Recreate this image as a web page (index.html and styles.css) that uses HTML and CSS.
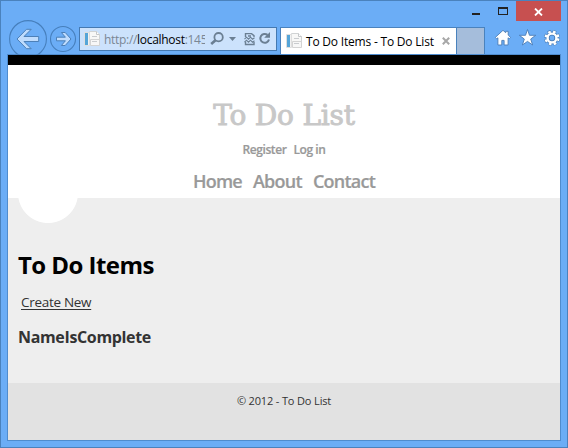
FILE: index.html
```html
<!DOCTYPE html>
<html lang="en">
<head>
<meta charset="utf-8">
<title>To Do Items - To Do List</title>
<link rel="stylesheet" href="styles.css">
</head>
<body>
<svg class="defs" width="0" height="0">
  <symbol id="page" viewBox="0 0 16 16">
    <path d="M5.5.5h7l3 3v10h-10z" fill="#f8f8f7" stroke="#d0d3d4"/>
    <path d="M12.5.5v3h3" fill="#fff" stroke="#c4c7c9"/>
    <path d="M.5 1.5h5v13h-5z" fill="#f2f2f2" stroke="#dedede"/>
    <path d="M1 2h3v12H1z" fill="#55a5d8"/>
    <path d="M6.5 8.5h9v6h-9z" fill="#f7f7f7" stroke="#d3d3d3"/>
    <path d="M8 5.5h5M8 10.5h5" stroke="#c9cccf"/>
  </symbol>
</svg>
<div class="window">
  <header class="chrome">
    <div class="buttons">
      <span class="button minimize"><i></i></span>
      <span class="button maximize"><i></i></span>
      <span class="button close"><svg width="9" height="8" viewBox="0 0 9 8"><path d="M1 .5l7 7M8 .5l-7 7" stroke="#fff" stroke-width="1.8"/></svg></span>
    </div>
    <div class="toolbar">
      <svg class="nav" width="70" height="35" viewBox="0 0 70 35">
        <g fill="none" stroke="#467fbc" stroke-width="1.1">
          <circle cx="19" cy="19" r="18.4"/><circle cx="54" cy="19" r="12.5"/>
        </g>
        <g fill="#bfdcfd" stroke="#4c80b8" stroke-width="1">
          <path d="M8 19l9.5-9.7h4.7L15 16.5h14.7v5H15l7.2 7.2h-4.7z"/>
          <path d="M62 19l-5.8-6.5h-3.8l4 4.7H47.5v3.6h8.9l-4 4.7h3.8z"/>
        </g>
      </svg>
      <div class="address">
        <svg class="favicon"><use href="#page"/></svg>
        <span class="url">http://<b>localhost</b>:145</span>
        <svg class="tools" width="64" height="18" viewBox="0 0 64 18">
          <g fill="none" stroke="#6b7f93">
            <circle cx="8.6" cy="7.2" r="4.2" stroke-width="1.8"/><path d="M5.5 10.2L1.2 14" stroke-width="2.6"/>
            <path d="M35.5 7V3.6h6l2.5 2V7M35.5 11.5v3H44V12M38 6h3" stroke-width="1.4"/>
            <path d="M34.5 9.2l2-2 2 2 2-2 2 2 2-1.5M34.5 12.2l2-2 2 2 2-2 2 2 2-1.5" stroke-width="1.1"/>
            <path d="M57.5 4.9A4.4 4.4 0 1 0 59 9.5" stroke-width="2"/>
          </g>
          <path d="M19 7h7l-3.5 4z" fill="#6b7f93"/><path d="M60 2v5.8h-5.8z" fill="#6b7f93"/>
        </svg>
      </div>
      <div class="tab">
        <svg class="favicon"><use href="#page"/></svg>
        <span class="tab-title">To Do Items - To Do List</span>
        <svg class="tab-close" width="8" height="8" viewBox="0 0 8 8"><path d="M.8.8l6.4 6.4M7.2.8L.8 7.2" stroke="#a7a7a7" stroke-width="2"/></svg>
      </div>
      <div class="new-tab"></div>
      <svg class="commands" width="68" height="20" viewBox="0 0 68 20">
        <g fill="#fff" stroke="#497cb5" stroke-width=".9">
          <path d="M9 2.3l2.7 2.4V3.3h2.5v3.8l2.4 2.3-1.4 1.4-1.1-1V17h-4v-4.6H7.8V17H3.9V9.8l-1.2 1L1.3 9.4z"/>
          <path d="M33.5 1.5l2 5.8h6.2l-5 3.7 1.9 6-5.1-3.6-5.1 3.6 1.9-6-5-3.7h6.2z"/>
        </g>
        <circle cx="58" cy="10" r="6.3" fill="none" stroke="#497cb5" stroke-width="3.4" stroke-dasharray="3.2 1.75"/>
        <circle cx="58" cy="10" r="4.4" fill="none" stroke="#497cb5" stroke-width="4"/>
        <circle cx="58" cy="10" r="6.3" fill="none" stroke="#fff" stroke-width="2.4" stroke-dasharray="2.5 2.45" stroke-dashoffset="-.35"/>
        <circle cx="58" cy="10" r="4.4" fill="none" stroke="#fff" stroke-width="2.4"/>
      </svg>
    </div>
  </header>
  <div class="viewport">
    <header class="site-header">
      <p class="site-title">To Do List</p>
      <div class="account"><a>Register</a><a>Log in</a></div>
      <nav class="menu"><a>Home</a><a>About</a><a>Contact</a></nav>
    </header>
    <main class="body">
      <div class="half-circle"></div>
      <h1>To Do Items</h1>
      <p class="create"><a>Create New</a></p>
      <div class="columns"><span>Name</span><span>IsComplete</span></div>
    </main>
    <footer class="site-footer"><p>© 2012 - To Do List</p></footer>
  </div>
</div>
</body>
</html>
```

FILE: styles.css
```css
* { box-sizing: border-box; }
body { margin: 0; font-family: "Open Sans", "Noto Sans", sans-serif; }
h1, p { margin: 0; }
svg { display: block; flex: none; }
.defs { position: absolute; }
.window {
  width: 568px; height: 448px; overflow: hidden;
  background: #6badf6; border: 1px solid #4a82bd;
  padding: 0 6px 6px;
}
.chrome { height: 53px; white-space: nowrap; }
.buttons { height: 20px; display: flex; justify-content: flex-end; }
.button { display: flex; justify-content: center; flex: none; }
.minimize { width: 30px; }
.minimize i { width: 8px; height: 2px; margin-top: 12px; background: #222; }
.maximize { width: 24px; margin-right: 1px; }
.maximize i { width: 10px; height: 8px; margin-top: 6px; border: 1px solid #222; border-top-width: 2px; }
.close { width: 45px; align-items: center; background: #c75050; padding-top: 1px; }
.toolbar { height: 33px; display: flex; align-items: flex-start; }
.nav { width: 70px; height: 35px; margin: -1px 0 0 2px; }
.address {
  width: 198px; height: 24px; margin-top: 6px; padding-left: 4px; flex: none;
  display: flex; align-items: center; background: #cce2fc; border: 1px solid #4579b1;
}
.favicon { width: 16px; height: 16px; }
.url { width: 101px; overflow: hidden; margin: 2px 0 0 4px; flex: none; font-size: 12px; line-height: 20px; letter-spacing: -.3px; color: #7a8795; }
.url b { font-weight: 400; color: #000; }
.tools { margin-left: 5px; }
.tab {
  width: 177px; height: 27px; margin: 6px 0 0 3px; padding-left: 5px; flex: none;
  display: flex; align-items: center; background: #fff; border: 1px solid #4a82bd; border-bottom: 0;
}
.tab-title { width: 129px; margin-left: 4px; flex: none; font-size: 12px; letter-spacing: -.2px; color: #000; }
.tab-close { margin-left: 7px; }
.new-tab { width: 28px; height: 27px; margin-top: 6px; flex: none; background: #a5bddb; border: 1px solid #4a82bd; border-width: 1px 1px 0 0; }
.commands { margin: 7px 0 0 9px; }
.viewport { width: 554px; height: 387px; border: 1px solid #4f8cce; background: #eee; }
.site-header { height: 143px; border-top: 10px solid #000; background: #fff; text-align: center; padding-top: 31px; }
.site-title { height: 40px; font: 28px/40px "DejaVu Serif", serif; letter-spacing: -.2px; -webkit-text-stroke: .9px #c8c8c8; color: #c8c8c8; }
.account { height: 28px; display: flex; justify-content: center; gap: 7px; font-size: 12px; line-height: 28px; font-weight: 600; letter-spacing: -.42px; -webkit-text-stroke: .2px #999; color: #999; }
.menu { display: flex; justify-content: center; gap: 11px; font-size: 18px; line-height: 34px; font-weight: 600; letter-spacing: -.75px; -webkit-text-stroke: .2px #999; color: #999; }
.body { height: 185px; padding-left: 10px; color: #333; }
.half-circle { width: 60px; height: 25px; overflow: hidden; background: radial-gradient(circle at 30px -5px, #fff 29.6px, transparent 30.4px); }
h1 { margin-top: 22px; font-size: 24px; line-height: 40px; letter-spacing: -.55px; color: #000; }
.create { margin: 4px 0 0 3px; font-size: 13.5px; line-height: 26px; letter-spacing: -.3px; }
.create a { text-decoration: underline; text-underline-offset: 2px; text-decoration-thickness: 1px; }
.columns { display: flex; margin-top: 8px; font-size: 16px; line-height: 28px; font-weight: 700; letter-spacing: -.35px; }
.site-footer { height: 57px; background: #e2e2e2; text-align: center; font-size: 11px; line-height: 36px; letter-spacing: -.15px; color: #333; }
```
